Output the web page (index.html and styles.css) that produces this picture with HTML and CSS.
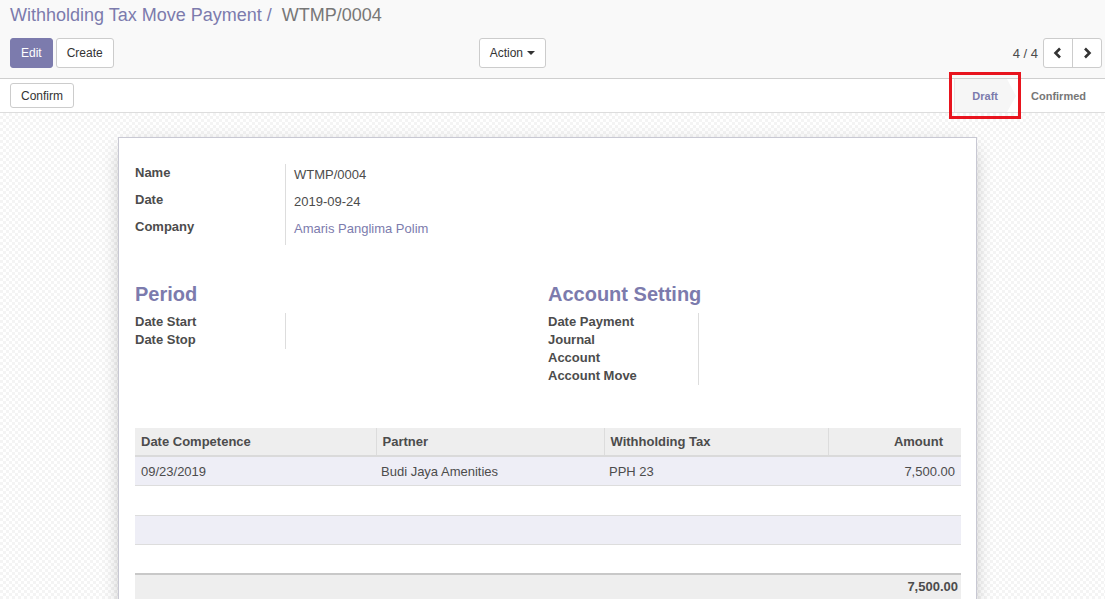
FILE: index.html
```html
<!DOCTYPE html>
<html>
<head>
<meta charset="utf-8">
<link rel="stylesheet" href="styles.css">
</head>
<body>
<div class="control-panel">
  <div class="breadcrumb"><span class="bc-link">Withholding Tax Move Payment</span><span class="bc-sep"> / </span><span class="bc-active">WTMP/0004</span></div>
  <div class="cp-row">
    <div class="cp-left">
      <div class="btn-group">
        <button class="btn btn-primary">Edit</button>
        <button class="btn">Create</button>
      </div>
      <button class="btn">Action <span class="caret"></span></button>
    </div>
    <div class="cp-right">
      <span class="pager-value">4 / 4</span>
      <div class="pager-btns">
        <button class="pbtn"><svg width="10" height="12" viewBox="0 0 10 12"><polyline points="7,1.5 2.5,6 7,10.5" fill="none" stroke="#333" stroke-width="2.6"/></svg></button>
        <button class="pbtn"><svg width="10" height="12" viewBox="0 0 10 12"><polyline points="3,1.5 7.5,6 3,10.5" fill="none" stroke="#333" stroke-width="2.6"/></svg></button>
      </div>
    </div>
  </div>
</div>
<div class="statusbar">
  <button class="btn btn-xs">Confirm</button>
  <div class="status-steps">
    <div class="step active">Draft<span class="arrow"></span></div>
    <div class="step">Confirmed</div>
  </div>
  <div class="highlight"></div>
</div>
<div class="sheet-bg">
  <div class="sheet">
    <div class="group main-group">
      <div class="lbl">Name</div><div class="val">WTMP/0004</div>
      <div class="lbl">Date</div><div class="val">2019-09-24</div>
      <div class="lbl">Company</div><div class="val link">Amaris Panglima Polim</div>
    </div>
    <div class="two-col">
      <div class="col">
        <h2 class="title">Period</h2>
        <div class="group small-group">
          <div class="lbl">Date Start</div><div class="val"></div>
          <div class="lbl">Date Stop</div><div class="val"></div>
        </div>
      </div>
      <div class="col">
        <h2 class="title">Account Setting</h2>
        <div class="group small-group">
          <div class="lbl">Date Payment</div><div class="val"></div>
          <div class="lbl">Journal</div><div class="val"></div>
          <div class="lbl">Account</div><div class="val"></div>
          <div class="lbl">Account Move</div><div class="val"></div>
        </div>
      </div>
    </div>
    <table class="lines">
      <colgroup><col class="c1"><col class="c2"><col class="c3"><col class="c4"></colgroup>
      <thead>
        <tr><th>Date Competence</th><th>Partner</th><th>Withholding Tax</th><th class="hnum">Amount</th></tr>
      </thead>
      <tbody>
        <tr class="odd"><td>09/23/2019</td><td>Budi Jaya Amenities</td><td>PPH 23</td><td class="num">7,500.00</td></tr>
        <tr><td></td><td></td><td></td><td></td></tr>
        <tr class="odd"><td></td><td></td><td></td><td></td></tr>
        <tr><td></td><td></td><td></td><td></td></tr>
      </tbody>
      <tfoot>
        <tr><td></td><td></td><td></td><td class="num fnum">7,500.00</td></tr>
      </tfoot>
    </table>
  </div>
</div>
</body>
</html>
```
FILE: styles.css
```css
* { box-sizing: border-box; }
html, body { margin: 0; padding: 0; }
body {
  font-family: "Liberation Sans", Arial, sans-serif;
  font-size: 13px;
  color: #4c4c4c;
  background: #fff;
  width: 1105px;
  height: 599px;
  overflow: hidden;
}
.control-panel {
  background: #f9f9f9;
  border-bottom: 1px solid #cfcfcf;
  padding: 4px 3px 10px 10px;
  height: 79px;
}
.breadcrumb {
  font-size: 18px;
  line-height: 22px;
  white-space: nowrap;
}
.bc-link { color: #7c7bad; }
.bc-sep { color: #7c7bad; }
.bc-active { color: #777; padding-left: 5px; }
.cp-row {
  display: flex;
  margin-top: 12px;
  height: 30px;
}
.cp-left {
  width: 542px;
  display: flex;
  justify-content: space-between;
  padding-right: 6px;
}
.cp-right {
  flex: 1;
  display: flex;
  justify-content: flex-end;
  align-items: center;
  gap: 5px;
}
.btn-group { display: flex; gap: 3px; }
.btn {
  font-family: "Liberation Sans", Arial, sans-serif;
  font-size: 12px;
  line-height: 18px;
  padding: 5px 10px;
  height: 30px;
  border: 1px solid #ccc;
  border-radius: 3px;
  background: #fff;
  color: #333;
  display: inline-flex;
  align-items: center;
}
.btn-primary {
  background: #7c7bad;
  border-color: #7c7bad;
  color: #fff;
}
.caret {
  display: inline-block;
  width: 0; height: 0;
  margin-left: 4px;
  border-top: 4px solid #333;
  border-left: 4px solid transparent;
  border-right: 4px solid transparent;
}
.pager-value { font-size: 13px; color: #4c4c4c; }
.pager-btns {
  display: flex;
  border: 1px solid #ccc;
  border-radius: 3px;
  background: #fff;
  height: 30px;
}
.pbtn {
  width: 28px;
  height: 28px;
  border: 0;
  background: transparent;
  display: flex;
  align-items: center;
  justify-content: center;
  padding: 0;
}
.pbtn + .pbtn { border-left: 1px solid #ccc; width: 29px; }
.statusbar {
  position: relative;
  height: 34px;
  background: #fff;
  border-bottom: 1px solid #ddd;
  display: flex;
  justify-content: space-between;
  align-items: flex-start;
  padding-left: 10px;
}
.btn-xs {
  height: 25px;
  padding: 3px 10px 1px;
  margin-top: 4px;
  line-height: 19px;
}
.status-steps {
  display: flex;
  align-items: stretch;
  height: 33px;
  font-size: 11px;
  font-weight: bold;
}
.step {
  position: relative;
  display: flex;
  align-items: center;
  color: #777;
  padding: 1px 19px 0 15px;
}
.step.active {
  background: #f6f6f6;
  color: #7c7bad;
  border-left: 1px solid #e6e6e6;
  padding: 1px 9px 0 17px;
  margin-right: 9px;
}
.arrow {
  position: absolute;
  right: -9px;
  top: 0;
  width: 0; height: 0;
  border-top: 17px solid transparent;
  border-bottom: 16px solid transparent;
  border-left: 9px solid #f6f6f6;
}
.arrow::before {
  content: "";
  position: absolute;
  left: -9px;
  top: -17px;
  width: 0; height: 0;
  border-top: 17px solid transparent;
  border-bottom: 16px solid transparent;
  border-left: 10px solid #e4e4e4;
  z-index: -1;
}
.highlight {
  position: absolute;
  left: 949px;
  top: -7px;
  width: 72px;
  height: 47px;
  border: 3px solid #e8141e;
  pointer-events: none;
}
.sheet-bg {
  height: 486px;
  padding-top: 24px;
  background-color: #fff;
  background-image: repeating-conic-gradient(#f4f4f4 0 25%, #fff 0 50%);
  background-size: 6px 6px;
  overflow: hidden;
}
.sheet {
  margin-left: 118px;
  width: 859px;
  min-height: 500px;
  background: #fff;
  border: 1px solid #c8c8d3;
  box-shadow: 0 5px 20px -8px rgba(0,0,0,0.45);
  padding: 26px 15px 0 16px;
}
.group {
  display: grid;
  grid-template-columns: 151px 1fr;
}
.lbl {
  font-weight: bold;
  border-right: 1px solid #ddd;
}
.val { padding-left: 8px; }
.main-group .lbl { height: 27px; line-height: 18px; }
.main-group .val { height: 27px; line-height: 18px; padding-top: 2px; }
.link { color: #7c7bad; }
.two-col {
  display: flex;
  margin-top: 37px;
}
.col { width: 50%; }
.title {
  margin: 0 0 7px 0;
  font-size: 20px;
  line-height: 24px;
  font-weight: bold;
  color: #7c7bad;
}
.small-group .lbl, .small-group .val { height: 18px; line-height: 18px; }
.lines {
  margin-top: 43px;
  width: 826px;
  border-collapse: collapse;
  table-layout: fixed;
}
.c1 { width: 241px; }
.c2 { width: 228px; }
.c3 { width: 224px; }
.c4 { width: 133px; }
.lines th {
  background: #eee;
  font-weight: bold;
  text-align: left;
  height: 28px;
  padding: 0 5px 0 6px;
  border-left: 1px solid #dcdcdc;
  border-bottom: 2px solid #dadada;
}
.lines th:first-child { border-left: 0; }
.lines th.hnum { text-align: right; padding-right: 18px; }
.lines td {
  height: 29.5px;
  padding: 0 6px 0 5px;
  border-top: 1px solid #ddd;
}
.lines tbody td:first-child { padding-left: 6px; }
.lines tbody tr:first-child td { border-top: 0; }
.lines tr.odd td { background: #eeeef6; }
.num { text-align: right; }
.lines tfoot td {
  background: #eee;
  border-top: 2px solid #c8c8c8;
  height: 28px;
  vertical-align: top;
  padding-top: 4px;
  font-weight: bold;
}
.lines tfoot td.fnum { padding-right: 3px; }
```
